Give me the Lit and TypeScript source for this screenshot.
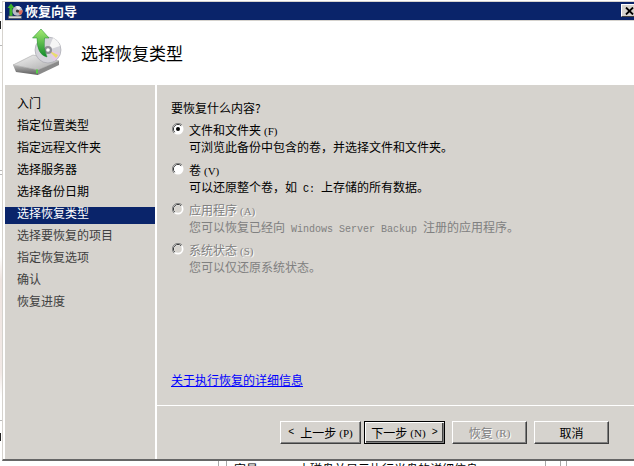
import { LitElement, html, css, svg } from "lit";
import { customElement } from "lit/decorators.js";

@customElement("app-root")
export class AppRoot extends LitElement {
  static styles = css`
    :host { display: block; width: 634px; height: 466px; position: relative; overflow: hidden; background: #fff;
      font-family: "Noto Sans CJK SC", "Liberation Sans", sans-serif; font-size: 12px; color: #000; }
    .strip { position: absolute; left: 0; top: 0; width: 2px; height: 466px;
      background: linear-gradient(#fff 0 55%, #eee4e0 60%, #f1e8e5 80%, #fff 85%); }
    .mark { position: absolute; left: 0; width: 2px; height: 1px; background: #b8b8b8; }
    .mark.d { background: #222; height: 8px; width: 1px; }
    .behind { position: absolute; top: 462px; font-size: 12px; line-height: 14px; white-space: nowrap; }
    .vline { position: absolute; top: 461px; width: 1px; height: 5px; background: #a8a8a8; }
    .win { position: absolute; left: 2px; top: 1px; width: 640px; height: 460px; box-sizing: border-box; padding-left: 2px;
      display: flex; flex-direction: column; background: #fff; border-top: 1px solid #d6d3ce; border-left: 1px solid #d6d3ce; border-bottom: 2px solid #666; }
    .title { height: 18px; background: #0a246a; color: #fff; font-weight: 700; display: flex; align-items: center; gap: 2px; padding-left: 2px; flex: none; position: relative; }
    .title span { line-height: 18px; font-size: 13px; }
    .close { position: absolute; left: 616px; top: 2px; width: 16px; height: 13px; background: #d6d3ce; border: 1px solid; border-color: #fff #404040 #404040 #fff; box-sizing: border-box; display: flex; align-items: center; justify-content: center; }
    .header { height: 65px; flex: none; background: #fff; border-top: 1px solid #d6d3ce; box-sizing: border-box; display: flex; align-items: center; padding-left: 8px; gap: 18px; }
    .header h1 { margin: 0; font-size: 17px; font-weight: 400; line-height: 20px; }
    .body { flex: 1; display: flex; min-height: 0; }
    .nav { width: 150px; background: #d6d3ce; padding-top: 7px; box-sizing: border-box; flex: none; }
    .nav div { height: 22px; line-height: 22px; padding-left: 12px; white-space: nowrap; }
    .nav .future { color: #404040; }
    .nav .cur { background: #0a246a; color: #fff; height: 17px; line-height: 11px; margin-top: 5px; }
    .main { flex: 1; margin-left: 2px; background: #d6d3ce; display: flex; flex-direction: column; }
    .content { height: 321px; box-sizing: border-box; padding: 15px 0 0 14px; border-bottom: 1px solid #fff; flex: none; display: flex; flex-direction: column; }
    .q { line-height: 16px; height: 16px; }
    .opt { display: flex; margin-top: 6px; }
    .radio { width: 12px; height: 12px; flex: none; margin: 1px 5px 0 1px; }
    .line { height: 17px; line-height: 15px; white-space: pre; }
    .opt.dis .line { color: #808080; }
    .opt.dis .l { text-shadow: 1px 1px 0 #fff; }
    .link { color: #0000ff; text-decoration: underline; margin-top: auto; margin-bottom: 17px; line-height: 16px; height: 16px; }
    .foot { flex: 1; display: flex; padding: 15px 0 0 123px; align-items: flex-start; }
    .btn { width: 75px; height: 23px; box-sizing: border-box; background: #d6d3ce; border: 1px solid; border-color: #fff #404040 #404040 #fff; box-shadow: inset -1px -1px 0 #808080; display: flex; align-items: center; justify-content: center; white-space: pre; line-height: 16px; flex: none; }
    .btn.wide { width: 81px; }
    .btn.def { border-color: #000; box-shadow: inset 1px 1px 0 #fff, inset -1px -1px 0 #808080, inset -2px -2px 0 #404040; margin: 0 0 0 3px; }
    .btn.dis { color: #808080; text-shadow: 1px 1px 0 #fff; margin-left: 7px; }
    .btn.c { margin-left: 7px; }
    .hk { font-family: "Liberation Serif", serif; font-size: 11px; margin-left: 3px; }
    .mono { font-family: "Liberation Mono", monospace; font-size: 10px; }
  `;

  radio(checked: boolean, disabled: boolean) {
    return html`<svg class="radio" viewBox="0 0 12 12">
      <circle cx="6" cy="6" r="5.5" fill="#fff" />
      <path d="M10 2A5.5 5.5 0 0 0 2 10" fill="none" stroke="#808080" />
      <path d="M9.2 2.8A4.5 4.5 0 0 0 2.8 9.2" fill="none" stroke="#303030" />
      <circle cx="6" cy="6" r="3.8" fill="${disabled ? "#d6d3ce" : "#fff"}" />
      ${checked ? svg`<circle cx="6" cy="6" r="2" fill="#000" />` : ""}
    </svg>`;
  }

  render() {
    const past = ["入门", "指定位置类型", "指定远程文件夹", "选择服务器", "选择备份日期"];
    const future = ["选择要恢复的项目", "指定恢复选项", "确认", "恢复进度"];
    return html`
      <div class="strip"></div>
      ${[12, 45, 170, 174, 420].map((y) => html`<div class="mark" style="top:${y}px"></div>`)}
      <div class="mark d" style="top:21px"></div>
      <div class="mark d" style="top:433px"></div>
      <div class="vline" style="left:218px"></div>
      <div class="vline" style="left:226px"></div>
      <div class="vline" style="left:545px"></div>
      <div class="vline" style="left:560px"></div>
      <div class="vline" style="left:566px"></div>
      <div class="behind" style="left:234px">容量:</div>
      <div class="behind" style="left:298px">本磁盘并显示执行光盘的详细信息。</div>
      <div class="win">
        <div class="title">
          <svg width="16" height="16" viewBox="0 0 16 16">
            <path d="M4 0.5 L7.5 5 H5.5 V13 H2.5 V5 H0.5 Z" fill="#3fb52a" />
            <circle cx="10.5" cy="8" r="5" fill="#b9b9c6" />
            <path d="M10.5 8 L15.5 7 A5 5 0 0 1 13 12.3 Z" fill="#d86a5a" />
            <path d="M10.5 8 L9 3.2 A5 5 0 0 1 14 4.5 Z" fill="#eeeeee" />
            <circle cx="10.5" cy="8" r="1.6" fill="#333" />
            <rect x="1.5" y="13" width="13" height="2.4" fill="#d8d8d8" stroke="#555" stroke-width=".6" />
          </svg>
          <span>恢复向导</span>
          <div class="close">
            <svg width="9" height="8" viewBox="0 0 9 8"><path d="M1 0.5 L8 7.5 M8 0.5 L1 7.5" stroke="#000" stroke-width="1.8" /></svg>
          </div>
        </div>
        <div class="header">
          <svg width="50" height="50" viewBox="0 0 50 50">
            <defs>
              <linearGradient id="d" x1="0" y1="0" x2="1" y2="1"><stop offset="0" stop-color="#f4f4f4" /><stop offset="1" stop-color="#a8a8a8" /></linearGradient>
              <linearGradient id="f" x1="0" y1="0" x2="0" y2="1"><stop offset="0" stop-color="#b8b8b8" /><stop offset="1" stop-color="#5c5c5c" /></linearGradient>
              <linearGradient id="a" x1="0" y1="0" x2="0" y2="1"><stop offset="0" stop-color="#a6ec72" /><stop offset="1" stop-color="#0f8a2a" /></linearGradient>
            </defs>
            <path d="M0 37 L20 27 L46 33 L25 42 Z" fill="url(#d)" stroke="#999" stroke-width=".5" />
            <path d="M0 37 L25 42 V47 L3 44 Z" fill="url(#f)" />
            <path d="M25 42 L46 33 V37 L25 47 Z" fill="#8a8a8a" />
            <rect x="23" y="41.5" width="2" height="4" fill="#55d045" />
            <circle cx="35" cy="22" r="13" fill="#d4d4da" stroke="#a0a0a8" stroke-width=".6" />
            <path d="M35 22 L47 25 A12.5 12.5 0 0 1 41 33 Z" fill="#e4c8e8" />
            <path d="M35 22 L45 27 A11 11 0 0 1 43 30 Z" fill="#e8dc70" />
            <path d="M35 22 L40 10 A12.5 12.5 0 0 1 47 18 Z" fill="#f6f6f6" />
            <circle cx="35" cy="22" r="4" fill="#8e8e96" />
            <circle cx="35" cy="22" r="1.8" fill="#fff" />
            <path d="M28 1 L36 10 H31.5 Q30 20 34 29 Q24 27 24 10 H19.5 Z" fill="url(#a)" stroke="#1a8a2a" stroke-width=".5" />
          </svg>
          <h1>选择恢复类型</h1>
        </div>
        <div class="body">
          <div class="nav">
            ${past.map((t) => html`<div>${t}</div>`)}
            <div class="cur">选择恢复类型</div>
            ${future.map((t) => html`<div class="future">${t}</div>`)}
          </div>
          <div class="main">
            <div class="content">
              <div class="q">要恢复什么内容?</div>
              <div class="opt">${this.radio(true, false)}<div>
                <div class="line">文件和文件夹<span class="hk">(F)</span></div>
                <div class="line">可浏览此备份中包含的卷，并选择文件和文件夹。</div>
              </div></div>
              <div class="opt">${this.radio(false, false)}<div>
                <div class="line">卷<span class="hk">(V)</span></div>
                <div class="line">可以还原整个卷，如<span class="mono"> C: </span>上存储的所有数据。</div>
              </div></div>
              <div class="opt dis">${this.radio(false, true)}<div>
                <div class="line l">应用程序<span class="hk">(A)</span></div>
                <div class="line">您可以恢复已经向<span class="mono"> Windows Server Backup </span>注册的应用程序。</div>
              </div></div>
              <div class="opt dis">${this.radio(false, true)}<div>
                <div class="line l">系统状态<span class="hk">(S)</span></div>
                <div class="line">您可以仅还原系统状态。</div>
              </div></div>
              <div class="link">关于执行恢复的详细信息</div>
            </div>
            <div class="foot">
              <div class="btn wide"><span class="mono">&lt; </span>上一步<span class="hk">(P)</span></div>
              <div class="btn wide def">下一步<span class="hk">(N)</span><span class="mono"> &gt;</span></div>
              <div class="btn dis">恢复<span class="hk">(R)</span></div>
              <div class="btn c">取消</div>
            </div>
          </div>
        </div>
      </div>
    `;
  }
}
